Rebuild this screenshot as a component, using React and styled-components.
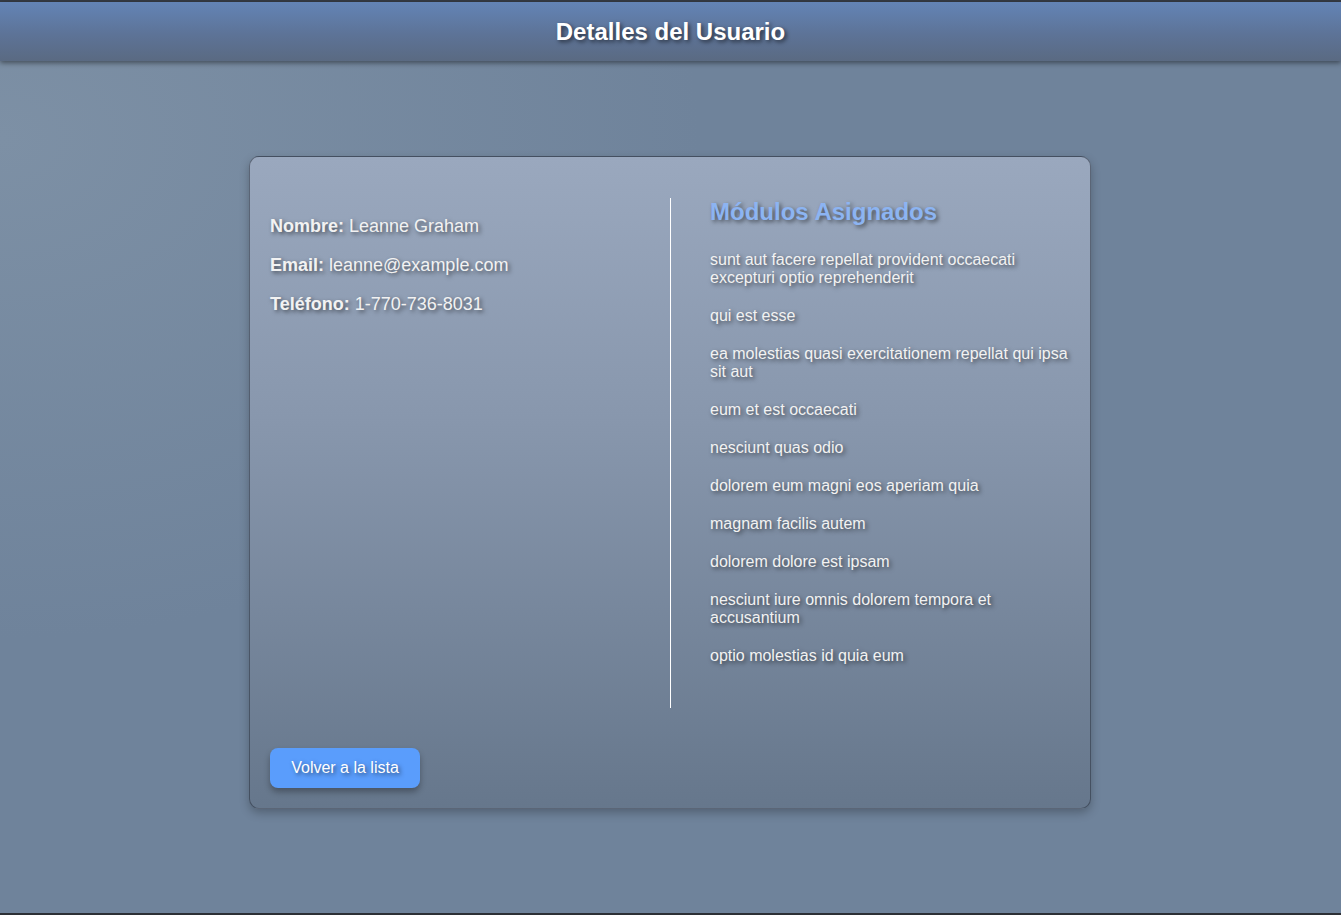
import React from 'react';
import styled, { createGlobalStyle } from 'styled-components';

const GlobalStyle = createGlobalStyle`
  html, body {
    margin: 0;
    padding: 0;
  }
  body {
    font-family: "Liberation Sans", Arial, sans-serif;
    background: #6f839b;
  }
  * {
    box-sizing: border-box;
  }
`;

const Page = styled.div`
  min-height: 100vh;
  border-top: 2px solid #353b45;
  border-bottom: 2px solid #2c2f35;
  background: radial-gradient(ellipse 700px 500px at 0% 15%, #7d90a5 0%, #6f839b 100%);
  display: flex;
  flex-direction: column;
`;

const Header = styled.header`
  height: 59px;
  display: flex;
  align-items: center;
  justify-content: center;
  background: linear-gradient(to bottom, #6384b6 0%, #5d7397 55%, #5a6a82 100%);
  box-shadow: 0 2px 5px rgba(0, 0, 0, 0.45);
`;

const Title = styled.h1`
  margin: 0;
  font-size: 24px;
  font-weight: bold;
  color: #fff;
  text-shadow: 2px 2px 4px rgba(0, 0, 0, 0.6);
`;

const Main = styled.main`
  display: flex;
  justify-content: center;
  padding: 95px 1px 0 0;
`;

const Card = styled.section`
  width: 842px;
  padding: 41px 20px 20px;
  border: 1px solid rgba(40, 48, 60, 0.55);
  border-radius: 10px;
  background: linear-gradient(to bottom, #9aa8be 0%, #8897ad 40%, #66778c 100%);
  box-shadow: 0 4px 10px rgba(0, 0, 0, 0.25);
`;

const Columns = styled.div`
  display: grid;
  grid-template-columns: 400px 400px;
`;

const InfoColumn = styled.div``;

const ModulesColumn = styled.div`
  border-left: 1px solid #fff;
  padding: 0 0 33px 39px;
`;

const InfoLine = styled.p`
  margin: 18px 0;
  font-size: 18px;
  color: #f2f2f2;
  text-shadow: 2px 2px 4px rgba(0, 0, 0, 0.55);
`;

const Label = styled.strong`
  font-weight: bold;
`;

const ModulesTitle = styled.h2`
  margin: 0 0 15px;
  font-size: 24px;
  font-weight: bold;
  color: #8cb4f2;
  text-shadow: 2px 2px 4px rgba(0, 0, 0, 0.55);
`;

const ModuleList = styled.ul`
  list-style: none;
  margin: 0;
  padding: 0;
`;

const ModuleItem = styled.li`
  padding: 10px 0;
  font-size: 16px;
  line-height: 18px;
  color: #f2f2f2;
  text-shadow: 2px 2px 4px rgba(0, 0, 0, 0.55);
`;

const BackButton = styled.button`
  margin-top: 40px;
  width: 150px;
  height: 40px;
  border: none;
  border-radius: 8px;
  background: #5a9dfc;
  color: #fff;
  font-family: inherit;
  font-size: 16px;
  text-shadow: 2px 2px 4px rgba(0, 0, 0, 0.5);
  box-shadow: 0 4px 6px rgba(0, 0, 0, 0.3);
  cursor: pointer;
`;

const modules = [
  'sunt aut facere repellat provident occaecati excepturi optio reprehenderit',
  'qui est esse',
  'ea molestias quasi exercitationem repellat qui ipsa sit aut',
  'eum et est occaecati',
  'nesciunt quas odio',
  'dolorem eum magni eos aperiam quia',
  'magnam facilis autem',
  'dolorem dolore est ipsam',
  'nesciunt iure omnis dolorem tempora et accusantium',
  'optio molestias id quia eum',
];

const App = () => {
  return (
    <>
      <GlobalStyle />
      <Page>
        <Header>
          <Title>Detalles del Usuario</Title>
        </Header>
        <Main>
          <Card>
            <Columns>
              <InfoColumn>
                <InfoLine><Label>Nombre:</Label> Leanne Graham</InfoLine>
                <InfoLine><Label>Email:</Label> leanne@example.com</InfoLine>
                <InfoLine><Label>Teléfono:</Label> 1-770-736-8031</InfoLine>
              </InfoColumn>
              <ModulesColumn>
                <ModulesTitle>Módulos Asignados</ModulesTitle>
                <ModuleList>
                  {modules.map((m, i) => (
                    <ModuleItem key={i}>{m}</ModuleItem>
                  ))}
                </ModuleList>
              </ModulesColumn>
            </Columns>
            <BackButton>Volver a la lista</BackButton>
          </Card>
        </Main>
      </Page>
    </>
  );
};

export default App;
